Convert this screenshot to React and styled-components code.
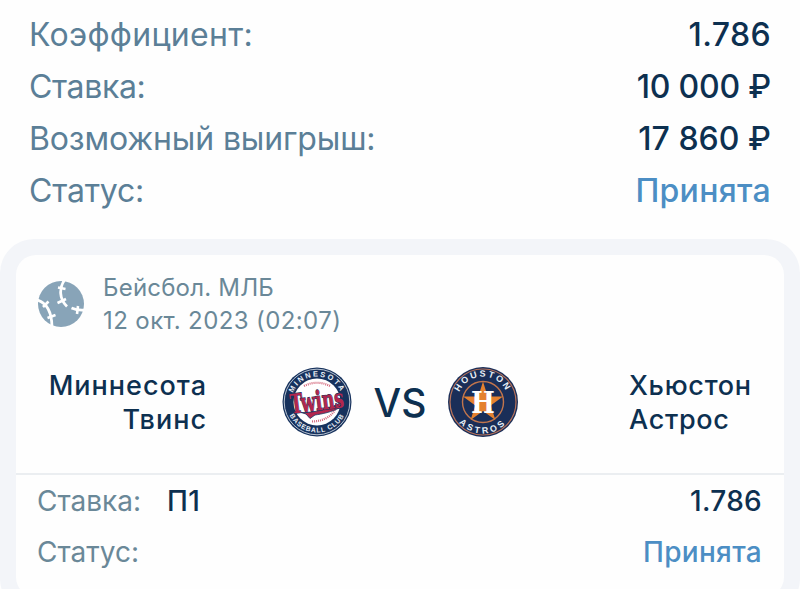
import React from "react";
import styled, { createGlobalStyle } from "styled-components";

const App = () => {
  return (
    <Page>
      <GlobalStyle />
      <Summary>
        <SummaryRow>
          <Label $spacing="0.3px">Коэффициент:</Label>
          <Value $spacing="0.4px">1.786</Value>
        </SummaryRow>
        <SummaryRow>
          <Label $spacing="-0.35px">Ставка:</Label>
          <Value $spacing="-0.2px">10 000 ₽</Value>
        </SummaryRow>
        <SummaryRow>
          <Label $spacing="-0.15px">Возможный выигрыш:</Label>
          <Value $spacing="0.05px">17 860 ₽</Value>
        </SummaryRow>
        <SummaryRow>
          <Label $spacing="-0.2px">Статус:</Label>
          <Value $accent $spacing="0.3px">
            Принята
          </Value>
        </SummaryRow>
      </Summary>
      <Panel>
        <Card>
          <Event>
            <BaseballIcon />
            <EventText>
              <EventLine $spacing="0.2px">Бейсбол. МЛБ</EventLine>
              <EventLine $spacing="0.4px">12 окт. 2023 (02:07)</EventLine>
            </EventText>
          </Event>
          <Match>
            <Team $align="right">
              <TeamLine $spacing="1px">Миннесота</TeamLine>
              <TeamLine $spacing="1px">Твинс</TeamLine>
            </Team>
            <Versus>
              <TwinsLogo />
              <VersusText>VS</VersusText>
              <AstrosLogo />
            </Versus>
            <Team>
              <TeamLine $spacing="0.7px">Хьюстон</TeamLine>
              <TeamLine $spacing="0.7px">Астрос</TeamLine>
            </Team>
          </Match>
          <Bet>
            <BetRow>
              <BetLabel>Ставка:</BetLabel>
              <Pick>П1</Pick>
              <BetValue>1.786</BetValue>
            </BetRow>
            <BetRow>
              <BetLabel>Статус:</BetLabel>
              <BetValue $accent>Принята</BetValue>
            </BetRow>
          </Bet>
        </Card>
      </Panel>
    </Page>
  );
};

const BaseballIcon = () => (
  <BallSvg viewBox="0 0 46 46">
    <circle cx="23" cy="23" r="23" fill="#88a4b8" />
    <g fill="none" stroke="#fff" strokeWidth="2.800">
      <path d="M26.500 -1C21 7 21 18 29 25.500" />
      <path d="M33.500 27C38 29 42 29.500 47 29" />
      <path d="M-1 19C9 22 14 31 14 47" />
      <g strokeWidth="2.600">
        <path d="M20 6.500L27.500 8" />
        <path d="M19.500 22L28 18" />
        <path d="M40 25L39 33" />
        <path d="M5 26L10.500 20.500" />
        <path d="M9.500 37L17.500 34" />
      </g>
    </g>
  </BallSvg>
);

const TwinsLogo = () => (
  <LogoSvg viewBox="0 0 70 70">
    <defs>
      <path id="twins-top" d="M9.500 35A25.500 25.500 0 0 1 60.500 35" />
      <path id="twins-bottom" d="M4.500 35A30.500 30.500 0 0 0 65.500 35" />
    </defs>
    <circle cx="35" cy="35" r="34.500" fill="#17325d" />
    <circle cx="35" cy="35" r="32.800" fill="none" stroke="#c9d2de" strokeWidth="0.9" />
    <circle cx="35" cy="35" r="23.500" fill="#fff" />
    <g fill="none" stroke="#d4687c" strokeWidth="2.200" strokeDasharray="1 1">
      <path d="M22 19Q35 12.500 48 19" />
      <path d="M30 54.500Q46 54 53 43" />
    </g>
    <LogoText fontSize="7.500" letterSpacing="1.900">
      <textPath href="#twins-top" startOffset="50%" textAnchor="middle">
        MINNESOTA
      </textPath>
    </LogoText>
    <LogoText fontSize="6.800" letterSpacing="0.800">
      <textPath href="#twins-bottom" startOffset="50%" textAnchor="middle">
        BASEBALL CLUB
      </textPath>
    </LogoText>
    <path
      d="M19 45.500C32 46 47 42 60 35L58 40.500C50 45 40 47 33 48L28 51.500L24 47Z"
      fill="#b3264d"
      stroke="#17325d"
      strokeWidth="0.8"
    />
    <Script x="8" y="43.500" transform="rotate(-7 35 35)" textLength="54" lengthAdjust="spacingAndGlyphs">
      Twins
    </Script>
  </LogoSvg>
);

const AstrosLogo = () => (
  <LogoSvg viewBox="0 0 70 70">
    <defs>
      <path id="astros-top" d="M9.500 35A25.500 25.500 0 0 1 60.500 35" />
      <path id="astros-bottom" d="M3.500 35A31.500 31.500 0 0 0 66.500 35" />
    </defs>
    <circle cx="35" cy="35" r="35" fill="#1a2e58" />
    <circle cx="35" cy="35" r="33" fill="none" stroke="#b9735a" strokeWidth="1.200" />
    <circle cx="35" cy="35" r="20.500" fill="none" stroke="#c2754c" strokeWidth="1.400" />
    <path
      d="M35 14.500L39.700 29.500H55L42.700 38.500L47.400 53L35 44L22.600 53L27.300 38.500L15 29.500H30.300Z"
      fill="#e5812f"
    />
    <LogoText fontSize="9" letterSpacing="2.100">
      <textPath href="#astros-top" startOffset="50%" textAnchor="middle">
        HOUSTON
      </textPath>
    </LogoText>
    <LogoText fontSize="9" letterSpacing="2.800">
      <textPath href="#astros-bottom" startOffset="50%" textAnchor="middle">
        ASTROS
      </textPath>
    </LogoText>
    <Monogram transform="translate(35 46) scale(0.84 1)" textAnchor="middle">
      H
    </Monogram>
  </LogoSvg>
);

const GlobalStyle = createGlobalStyle`
  body {
    margin: 0;
    overflow: hidden;
    background: #fefefe;
  }
`;

const Page = styled.div`
  height: 589px;
  overflow: hidden;
  font-family: Inter, "Liberation Sans", sans-serif;
  color: #0d3050;
`;

const Summary = styled.div`
  height: 239px;
  box-sizing: border-box;
  padding: 9px 29px 0;
`;

const SummaryRow = styled.div`
  display: flex;
  justify-content: space-between;
  height: 52px;
  line-height: 52px;
  font-size: 32px;
`;

const Label = styled.span`
  color: #5b7f97;
  letter-spacing: ${(p) => p.$spacing || 0};
`;

const Value = styled.span`
  font-weight: 500;
  color: ${(p) => (p.$accent ? "#4c8ec4" : "#0d3050")};
  letter-spacing: ${(p) => p.$spacing || 0};
`;

const Panel = styled.div`
  padding: 16px;
  border-radius: 34px;
  background: #f3f5f9;
`;

const Card = styled.div`
  height: 342px;
  border-radius: 20px;
  background: #fefefe;
`;

const Event = styled.div`
  display: flex;
  align-items: center;
  gap: 19px;
  height: 98px;
  padding-left: 22px;
`;

const BallSvg = styled.svg`
  width: 46px;
  height: 46px;
`;

const EventText = styled.div`
  display: flex;
  flex-direction: column;
`;

const EventLine = styled.span`
  height: 33px;
  line-height: 33px;
  font-size: 24px;
  color: #6a8898;
  letter-spacing: ${(p) => p.$spacing};
`;

const Match = styled.div`
  display: grid;
  grid-template-columns: 191px 1fr 155px;
  height: 122px;
  box-sizing: border-box;
  padding-top: 14px;
  border-bottom: 2px solid #ebeef1;
`;

const Team = styled.div`
  display: flex;
  flex-direction: column;
  padding-top: 2px;
  text-align: ${(p) => p.$align || "left"};
`;

const TeamLine = styled.span`
  height: 34px;
  line-height: 34px;
  font-size: 27px;
  font-weight: 500;
  letter-spacing: ${(p) => p.$spacing};
`;

const Versus = styled.div`
  display: flex;
  align-items: center;
  height: 70px;
  padding-left: 75px;
`;

const VersusText = styled.span`
  width: 96px;
  text-align: center;
  font-size: 39px;
  font-weight: 500;
`;

const LogoSvg = styled.svg`
  width: 70px;
  height: 70px;
  overflow: visible;
`;

const LogoText = styled.text`
  font-family: "Liberation Sans", sans-serif;
  font-weight: 700;
  fill: #e8eef5;
`;

const Script = styled.text`
  font-family: "DejaVu Serif", serif;
  font-size: 27px;
  font-weight: 700;
  fill: #b3264d;
  stroke: #17325d;
  stroke-width: 1.2px;
  paint-order: stroke;
`;

const Monogram = styled.text`
  font-family: "DejaVu Serif", serif;
  font-size: 30px;
  font-weight: 700;
  fill: #fff;
`;

const Bet = styled.div`
  display: flex;
  flex-direction: column;
  padding: 1px 22px 0 21px;
`;

const BetRow = styled.div`
  display: flex;
  height: 51px;
  line-height: 51px;
  font-size: 28px;
`;

const BetLabel = styled.span`
  color: #6a8898;
`;

const Pick = styled.span`
  margin-left: 26px;
  font-weight: 500;
  letter-spacing: 0.3px;
`;

const BetValue = styled.span`
  margin-left: auto;
  font-weight: 500;
  letter-spacing: 0.3px;
  color: ${(p) => (p.$accent ? "#4c8ec4" : "#0d3050")};
`;

export default App;
